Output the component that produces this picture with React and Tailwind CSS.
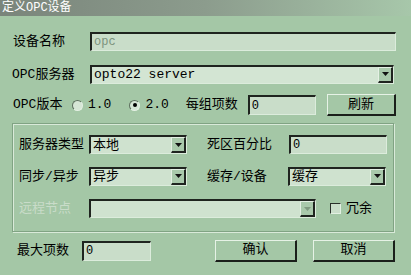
import React from 'react';

const font = { fontFamily: '"Liberation Mono", "Noto Sans CJK SC", monospace' };

const Sunken = ({ className = '', children }) => (
  <div
    className={`flex items-center border-t-2 border-l-2 border-b border-r border-t-[#1f241f] border-l-[#1f241f] border-b-[#dcecdc] border-r-[#dcecdc] bg-[#c9ddc9] ${className}`}
  >
    {children}
  </div>
);

const Arrow = ({ disabled }) => (
  <div className="ml-auto flex h-full w-[15px] items-center justify-center border-t border-l border-b-2 border-r-2 border-t-[#e4f0e4] border-l-[#e4f0e4] border-b-[#1f241f] border-r-[#1f241f] bg-[#a9c9ab]">
    <svg width="7" height="4" viewBox="0 0 7 4">
      <path d="M0 0h7L3.5 4z" fill={disabled ? '#7f9a80' : '#111'} />
    </svg>
  </div>
);

const Select = ({ value, className = '', disabled }) => (
  <Sunken className={`h-[19px] bg-[#cfe2cf] ${className}`}>
    <span className="pl-[2px] text-[13px] leading-none text-black">{value}</span>
    <Arrow disabled={disabled} />
  </Sunken>
);

const Button = ({ label, className = '' }) => (
  <div
    className={`flex h-[22px] items-center justify-center border-t border-l border-b-2 border-r-2 border-t-[#e6f2e6] border-l-[#e6f2e6] border-b-[#1a1f1a] border-r-[#1a1f1a] bg-[#a4c7a6] text-[13px] text-black ${className}`}
  >
    {label}
  </div>
);

const Radio = ({ checked, label }) => (
  <div className="flex items-center gap-[5px]">
    <div className="flex h-[11px] w-[11px] items-center justify-center rounded-full border border-t-[#5d6f5e] border-l-[#5d6f5e] border-b-[#e3f0e3] border-r-[#e3f0e3] bg-[#d6e6d6]">
      {checked && <div className="h-[4px] w-[4px] rounded-full bg-black" />}
    </div>
    <span className="text-[13px] text-black">{label}</span>
  </div>
);

export default function App() {
  return (
    <div className="h-[275px] w-[411px] overflow-hidden bg-[#a4c7a6] text-black" style={font}>
      {/* Title bar */}
      <div className="flex h-[16px] items-center bg-gradient-to-r from-[#7a857b] via-[#8c9c8d] to-[#a7c7aa] pl-[2px] text-[12px] leading-none text-white">
        定义OPC设备
      </div>

      <div className="pl-[12px] pr-[15px]">
        {/* Device name */}
        <div className="mt-[16px] flex items-center">
          <span className="w-[78px] pl-[1px] text-[13px]">设备名称</span>
          <Sunken className="h-[19px] flex-1">
            <span className="pl-[2px] text-[12px] text-[#7c937d]">opc</span>
          </Sunken>
        </div>

        {/* OPC server */}
        <div className="mt-[13px] flex items-center">
          <span className="w-[78px] text-[13px]">OPC服务器</span>
          <Select value="opto22 server" className="mr-[2px] flex-1 bg-[#d3e5d3]" />
        </div>

        {/* OPC version */}
        <div className="mt-[10px] flex items-center">
          <span className="w-[60px] pl-[1px] text-[13px]">OPC版本</span>
          <div className="flex items-center gap-[18px]">
            <Radio label="1.0" />
            <Radio checked label="2.0" />
          </div>
          <span className="ml-[17px] w-[62px] text-[13px]">每组项数</span>
          <Sunken className="h-[20px] w-[68px]">
            <span className="pl-[2px] text-[12px]">0</span>
          </Sunken>
          <Button label="刷新" className="ml-[11px] flex-1" />
        </div>

        {/* Group box */}
        <div className="mt-[7px] mr-[2px] border border-[#80a383] px-[6px] pb-[12px] pt-[11px] shadow-[inset_1px_1px_0_#d9ead9,1px_1px_0_#d9ead9]">
          <div className="flex items-center">
            <span className="w-[70px] text-[13px]">服务器类型</span>
            <Select value="本地" className="w-[98px]" />
            <span className="ml-[20px] w-[82px] text-[13px]">死区百分比</span>
            <Sunken className="h-[19px] w-[98px]">
              <span className="pl-[2px] text-[12px]">0</span>
            </Sunken>
          </div>
          <div className="mt-[12px] flex items-center">
            <span className="w-[70px] text-[13px]">同步/异步</span>
            <Select value="异步" className="w-[98px]" />
            <span className="ml-[20px] w-[81px] text-[13px]">缓存/设备</span>
            <Select value="缓存" className="w-[98px]" />
          </div>
          <div className="mt-[13px] flex items-center">
            <span className="w-[70px] text-[13px] text-[#c9dcc9]">远程节点</span>
            <Select value="" className="w-[227px] bg-[#a4c7a6]" disabled />
            <div className="ml-[14px] h-[11px] w-[11px] border border-t-[#2a302a] border-l-[#2a302a] border-b-[#e3f0e3] border-r-[#e3f0e3] bg-[#cadeca]" />
            <span className="ml-[5px] text-[13px]">冗余</span>
          </div>
        </div>

        {/* Bottom */}
        <div className="mt-[8px] flex items-center">
          <span className="w-[70px] pl-[5px] text-[13px]">最大项数</span>
          <Sunken className="h-[20px] w-[69px]">
            <span className="pl-[2px] text-[12px]">0</span>
          </Sunken>
          <Button label="确认" className="ml-[64px] w-[82px]" />
          <Button label="取消" className="ml-[16px] w-[82px]" />
        </div>
      </div>
    </div>
  );
}
